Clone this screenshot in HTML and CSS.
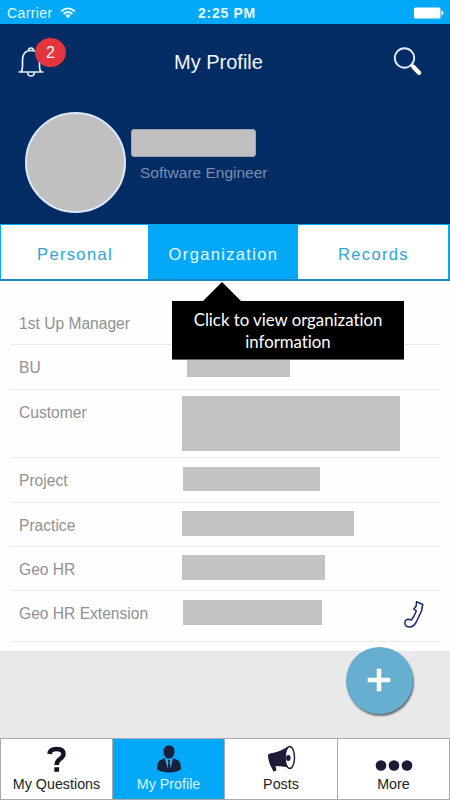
FILE: index.html
```html
<!DOCTYPE html>
<html lang="en">
<head>
<meta charset="utf-8">
<title>My Profile</title>
<link rel="stylesheet" href="styles.css">
</head>
<body>
<div class="screen">
  <div class="status">
    <div class="carrier"><span>Carrier</span>
      <svg width="16" height="12" viewBox="0 0 16 12" fill="none" stroke="#e4fbff" stroke-width="1.8"><path d="M1 4.5Q8-1.7 15 4.5M3.5 7Q8 3 12.500 7"/><path d="M5.300 8.500Q8 6.200 10.700 8.500L8 11.300Z" fill="#e4fbff" stroke="none"/></svg>
    </div>
    <span class="clock">2:25 PM</span>
    <svg class="battery" width="30" height="12" viewBox="0 0 30 12" fill="#fff"><rect x="0" y="0.500" width="26.500" height="11" rx="1.500"/><path d="M27.500 3.500Q29.500 4 29.500 6T27.500 8.500Z"/></svg>
  </div>
  <header class="titlebar">
    <div class="bell">
      <svg width="28" height="32" viewBox="0 0 28 32" fill="none" stroke="#e8f1ff" stroke-width="1.700"><path d="M1.500 26H26.500M4 26Q5.500 24 5.500 20V14C5.500 8 8.500 4.500 14 4.500S22.500 8 22.500 14V20Q22.500 24 24 26"/><path d="M11.500 4.500Q11.500 2 14 2T16.500 4.500M10.500 26.500Q11 30 14 30T17.500 26.500"/></svg>
      <span class="badge">2</span>
    </div>
    <h1>My Profile</h1>
    <svg class="search" width="30" height="30" viewBox="0 0 30 30" fill="none"><circle cx="11.500" cy="11" r="9.700" stroke="#deebff" stroke-width="1.900"/><path d="M17.500 17.500L21 20.500" stroke="#fff" stroke-width="2"/><path d="M20.500 20L26 25.800" stroke="#fff" stroke-width="4.500" stroke-linecap="round"/></svg>
  </header>
  <section class="person">
    <div class="avatar"></div>
    <div class="who"><div class="name"></div><div class="role">Software Engineer</div></div>
  </section>
  <nav class="tabs">
    <div class="tab">Personal</div><div class="tab on">Organization</div><div class="tab">Records</div>
    <div class="tip">Click to view organization<br>information</div>
  </nav>
  <main class="info">
    <div class="row manager"><span>1st Up Manager</span></div>
    <div class="row bu"><span>BU</span><div class="value"></div></div>
    <div class="row customer"><span>Customer</span><div class="value"></div></div>
    <div class="row project"><span>Project</span><div class="value"></div></div>
    <div class="row practice"><span>Practice</span><div class="value"></div></div>
    <div class="row hr"><span>Geo HR</span><div class="value"></div></div>
    <div class="row ext"><span>Geo HR Extension</span><div class="value"></div>
      <svg class="phone" width="22" height="30" viewBox="0 0 22 30" fill="none" stroke="#1b2c66" stroke-width="1.500" stroke-linejoin="round"><path d="M13.500 1.800L19.800 4.500L18.500 11L13 22.500Q10.500 26.800 7 27Q2 27 1.800 23Q2 19.500 5.500 19.300L8.500 20Q11.500 16 13.300 11L10.800 9L13.200 6Z"/></svg>
    </div>
  </main>
  <div class="space">
    <div class="add"><svg width="24" height="24" viewBox="0 0 24 24" stroke="#fff" stroke-width="4.500"><path d="M12 .7V23.300M.7 12H23.300"/></svg></div>
  </div>
  <footer class="bottom">
    <div class="item"><svg class="question" width="22" height="29" viewBox="0 0 22 29" fill="none" stroke="#111326" stroke-width="4.500"><path d="M3.500 9.500Q4 4.500 10.500 4.500Q17.500 4.500 17.500 9.500Q17.500 12 14 14.500Q10.700 16.800 10.700 20.500"/><path d="M8.300 25H13.100"/></svg><span>My Questions</span></div>
    <div class="item on"><svg width="26" height="29" viewBox="0 0 26 29" fill="#18203c"><path d="M13 1C9.300 1 7.300 3.500 7.500 7.500C7.700 11 9.700 14 13 14S18.300 11 18.500 7.500C18.700 3.500 16.700 1 13 1Z"/><path d="M9 13.500L3.500 16Q1 18 1 25Q6 28 13 28T25 25Q25 18 22.500 16L17 13.500L13 15.500Z"/><path d="M9 14L11.600 24L12.400 17.500L11.500 16L13 15L14.500 16L13.600 17.500L14.400 24L17 14L15.500 14L13 15.500L10.500 14Z" fill="#35aee9"/></svg><span>My Profile</span></div>
    <div class="item"><svg width="30" height="29" viewBox="0 0 30 29"><path d="M2 12Q1.500 9.500 4 9Q14 7.500 22 2L26 24Q19 21.500 9.500 21.500L10.500 26L7.500 27L4 20Q2.500 16 2 12Z" fill="#1c1b38"/><ellipse cx="23.800" cy="13" rx="4.700" ry="11" fill="#fff" stroke="#1c1b38" stroke-width="1.400"/><ellipse cx="22.300" cy="13.500" rx="2.300" ry="3" fill="#1c1b38"/></svg><span>Posts</span></div>
    <div class="item"><svg width="38" height="29" viewBox="0 0 38 29" fill="#1c1b38"><circle cx="6" cy="21" r="5.300"/><circle cx="19" cy="21" r="5.300"/><circle cx="32" cy="21" r="5.300"/></svg><span>More</span></div>
  </footer>
</div>
</body>
</html>
```
FILE: styles.css
```css
* { box-sizing: border-box; }
body { margin: 0; font-family: "Liberation Sans", sans-serif; }
svg { display: block; }
.screen { width: 450px; height: 800px; display: flex; flex-direction: column; overflow: hidden; background: #fff; }
.status { height: 24px; flex: none; display: grid; grid-template-columns: 1fr auto 1fr; align-items: center; padding: 1px 6px 0 7px; background: #04a8f8; color: #e4fbff; }
.carrier { display: flex; align-items: center; gap: 7px; font-size: 14px; letter-spacing: .4px; }
.clock { padding-left: 3px; font-size: 14px; font-weight: bold; letter-spacing: .7px; }
.battery { justify-self: end; }
.titlebar { height: 76px; flex: none; display: flex; align-items: flex-start; padding: 22px 27px 0 17px; background: #042c64; color: #f2f6ff; }
.bell { position: relative; width: 39px; }
.badge { position: absolute; left: 18px; top: -8px; width: 31px; height: 29px; border-radius: 50%; background: #e3353d; font-size: 16px; line-height: 30px; text-align: center; }
h1 { margin: 4px 0 0 118px; font-size: 20px; line-height: 24px; font-weight: normal; white-space: nowrap; }
.search { margin: 1px 0 0 auto; }
.person { height: 124px; flex: none; display: flex; gap: 5px; padding: 12px 25px; background: #042c64; }
.avatar { width: 101px; height: 101px; border: 2px solid #dce8f8; border-radius: 50%; background: #c0c0c0; }
.who { padding-top: 17px; }
.name { width: 125px; height: 28px; border: 1px solid #9ba5b5; border-radius: 3px; background: #c0c0c0; }
.role { margin: 6px 0 0 9px; font-size: 15.500px; line-height: 20px; color: #7b8daf; }
.tabs { position: relative; height: 57px; flex: none; display: grid; grid-template-columns: 147px 148px 150px; gap: 1px; padding: 1px 2px 2px 1px; background: #04a8f8; box-shadow: inset 0 -2px #168ac8; }
.tab { display: flex; align-items: center; justify-content: center; padding: 5px 0 0 1px; background: #fff; color: #2ba5da; font-size: 16.500px; letter-spacing: 1.350px; }
.tab.on { background: #04a8f8; color: #e8faff; }
.tip { position: absolute; z-index: 2; left: 172px; top: 77px; width: 232px; height: 59px; padding-top: 8px; background: #000; color: #fff; font: 16.800px/22px Lato, sans-serif; font-variant-ligatures: none; text-align: center; border-bottom: 1px solid #666; }
.tip::before { content: ""; position: absolute; left: 31px; top: -19px; border: solid transparent; border-width: 0 19px 19px; border-bottom-color: #000; }
.info { height: 370px; flex: none; padding: 0 10px; background: #fefefe; }
.row { display: flex; height: 44px; padding: 13px 10px 0 9px; border-bottom: 1px solid #ebebeb; color: #919191; font-size: 15.600px; line-height: 20px; }
.row span { width: 164px; flex: none; }
.value { width: 138px; height: 24px; background: #c2c2c2; }
.manager { height: 64px; padding-top: 33px; }
.bu { height: 45px; }
.bu .value { width: 103px; height: 17px; margin: 2px 0 0 4px; }
.customer { height: 68px; }
.customer .value { width: 218px; height: 55px; margin: -7px 0 0 -1px; }
.project { height: 45px; }
.project .value { width: 137px; margin-top: -4px; }
.practice .value { width: 172px; height: 25px; margin: -5px 0 0 -1px; }
.hr .value { width: 143px; height: 25px; margin: -5px 0 0 -1px; }
.ext { height: 51px; }
.ext .value { width: 139px; height: 25px; margin-top: -4px; }
.phone { margin: -4px 5px 0 auto; }
.space { position: relative; flex: 1; background: #e9e9e9; }
.add { position: absolute; right: 37px; top: -4px; width: 67px; height: 67px; display: grid; place-items: center; padding: 0 2px 2px 0; border-radius: 50%; background: #67afd0; box-shadow: 1px 2px 2px #626c70; }
.bottom { height: 62px; flex: none; display: grid; grid-template-columns: 111px 111px 112px 111px; gap: 1px; padding: 1px; background: #aaa; }
.item { display: flex; flex-direction: column; align-items: center; padding-top: 5px; background: #fff; color: #222; font-size: 14.300px; line-height: 20px; }
.item svg { height: 30px; }
.item.on { background: #04a8f8; color: #d8f6ff; }
```
